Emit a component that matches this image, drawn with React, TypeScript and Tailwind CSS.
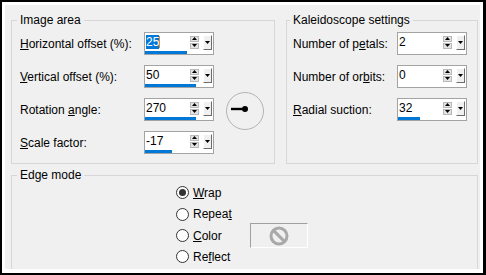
import React from "react";

type SpinProps = {
  value: string;
  bar?: number; // width of the blue slider indicator, px
  selected?: boolean;
};

function SpinField({ value, bar = 0, selected = false }: SpinProps) {
  return (
    <div className="w-[70px] h-[23px] border border-[#a3a3a3] bg-white flex flex-col">
      <div className="h-[18px] flex items-center">
        <div className="flex-1 flex items-center pl-[1px] leading-[14px]">
          {selected ? (
            <>
              <span className="bg-[#0078d7] text-white">{value}</span>
              <span className="w-[1px] h-[12px] bg-[#f08a24]" />
            </>
          ) : (
            <span>{value}</span>
          )}
        </div>
        {/* up / down buttons */}
        <div className="w-[9px] flex flex-col gap-[1px]">
          <div className="h-[6px] bg-[#e3e3e3] border border-[#b9b9b9] flex items-center justify-center">
            <svg width="5" height="3" viewBox="0 0 5 3">
              <path d="M2.5 0 L5 3 L0 3 Z" fill="#000" />
            </svg>
          </div>
          <div className="h-[6px] bg-[#e3e3e3] border border-[#b9b9b9] flex items-center justify-center">
            <svg width="5" height="3" viewBox="0 0 5 3">
              <path d="M0 0 L5 0 L2.5 3 Z" fill="#000" />
            </svg>
          </div>
        </div>
        {/* dropdown */}
        <div className="ml-[4px] mr-[1px] w-[9px] h-[15px] bg-[#f0f0f0] border-t border-l border-t-white border-l-white border-r border-b border-r-[#6d6d6d] border-b-[#6d6d6d] flex items-center justify-center">
          <svg width="5" height="3" viewBox="0 0 5 3">
            <path d="M0 0 L5 0 L2.5 3 Z" fill="#000" />
          </svg>
        </div>
      </div>
      <div className="h-[3px]">
        {bar > 0 && <div className="h-full bg-[#0078d7]" style={{ width: bar }} />}
      </div>
    </div>
  );
}

function Radio({ label, mnemonic, checked = false }: { label: string; mnemonic: number; checked?: boolean }) {
  return (
    <div className="flex items-center">
      <span className="w-[13px] h-[13px] rounded-full border border-[#333] bg-white flex items-center justify-center">
        {checked && <span className="w-[7px] h-[7px] rounded-full bg-[#333]" />}
      </span>
      <span className="ml-[4px] leading-[14px]">
        {label.slice(0, mnemonic)}
        <u>{label[mnemonic]}</u>
        {label.slice(mnemonic + 1)}
      </span>
    </div>
  );
}

function Label({ text, mnemonic, width }: { text: string; mnemonic: number; width: string }) {
  return (
    <span className={`${width} leading-[14px]`}>
      {text.slice(0, mnemonic)}
      <u>{text[mnemonic]}</u>
      {text.slice(mnemonic + 1)}
    </span>
  );
}

export default function App() {
  return (
    <div className="w-[486px] h-[275px] bg-white border-black border-t-2 border-l-2 border-r-[3px] border-b-2 pt-[3px] pl-[3px] pr-[3px] pb-[4px] font-['Liberation_Sans',sans-serif] text-[12px] text-black">
      <div className="h-full bg-[#f0f0f0] pt-[8px] pl-[6px] pr-[2px] flex flex-col">
        <div className="flex gap-[11px]">
          {/* Image area */}
          <fieldset className="w-[264px] h-[151px] border border-[#d7d7d7] m-0 p-0">
            <legend className="ml-[5px] px-[3px] leading-[14px]">Image area</legend>
            <div className="flex flex-col gap-[10px] pl-[8px] pt-[5px]">
              <div className="h-[23px] flex items-center">
                <Label text="Horizontal offset (%):" mnemonic={0} width="w-[124px]" />
                <SpinField value="25" bar={42} selected />
              </div>
              <div className="h-[23px] flex items-center">
                <Label text="Vertical offset (%):" mnemonic={0} width="w-[124px]" />
                <SpinField value="50" bar={51} />
              </div>
              <div className="h-[23px] flex items-center">
                <Label text="Rotation angle:" mnemonic={9} width="w-[124px]" />
                <SpinField value="270" bar={51} />
                <svg width="40" height="40" viewBox="0 0 40 40" className="ml-[11px] self-start -mt-[7px] shrink-0">
                  <circle cx="20" cy="20" r="18.5" fill="none" stroke="#b4b4b4" strokeWidth="1" />
                  <line x1="6" y1="18" x2="20" y2="18" stroke="#000" strokeWidth="2.4" />
                  <circle cx="20" cy="18" r="3" fill="#000" />
                </svg>
              </div>
              <div className="h-[23px] flex items-center">
                <Label text="Scale factor:" mnemonic={0} width="w-[124px]" />
                <SpinField value="-17" bar={27} />
              </div>
            </div>
          </fieldset>

          {/* Kaleidoscope settings */}
          <fieldset className="flex-1 h-[151px] border border-[#d7d7d7] m-0 p-0">
            <legend className="ml-[3px] px-[3px] leading-[14px]">Kaleidoscope settings</legend>
            <div className="flex flex-col gap-[10px] pl-[6px] pt-[5px]">
              <div className="h-[23px] flex items-center">
                <Label text="Number of petals:" mnemonic={11} width="w-[104px]" />
                <SpinField value="2" />
              </div>
              <div className="h-[23px] flex items-center">
                <Label text="Number of orbits:" mnemonic={12} width="w-[104px]" />
                <SpinField value="0" />
              </div>
              <div className="h-[23px] flex items-center">
                <Label text="Radial suction:" mnemonic={0} width="w-[104px]" />
                <SpinField value="32" bar={22} />
              </div>
            </div>
          </fieldset>
        </div>

        {/* Edge mode */}
        <fieldset className="mt-[4px] flex-1 border border-b-0 border-[#d7d7d7] m-0 p-0">
          <legend className="ml-[5px] px-[3px] leading-[14px]">Edge mode</legend>
          <div className="flex flex-col pl-[164px]">
            <div className="h-[21px] flex items-center">
              <Radio label="Wrap" mnemonic={0} checked />
            </div>
            <div className="h-[22px] flex items-center">
              <Radio label="Repeat" mnemonic={5} />
            </div>
            <div className="h-[21px] flex items-center">
              <div className="w-[74px]">
                <Radio label="Color" mnemonic={0} />
              </div>
              <div className="w-[58px] h-[25px] shrink-0 border border-t-[#a0a0a0] border-l-[#a0a0a0] border-r-white border-b-white bg-[#f0f0f0] flex items-center justify-center">
                <svg width="22" height="22" viewBox="0 0 22 22">
                  <circle cx="11" cy="11" r="8" fill="none" stroke="#a9a9a9" strokeWidth="3" />
                  <line x1="5.6" y1="5.6" x2="16.4" y2="16.4" stroke="#a9a9a9" strokeWidth="3" />
                </svg>
              </div>
            </div>
            <div className="h-[21px] flex items-center">
              <Radio label="Reflect" mnemonic={2} />
            </div>
          </div>
        </fieldset>
      </div>
    </div>
  );
}
